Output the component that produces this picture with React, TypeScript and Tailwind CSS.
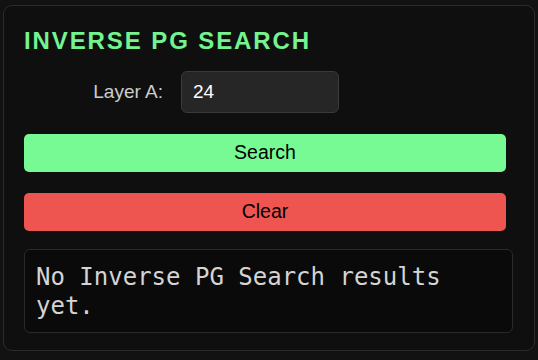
import { useState } from 'react';

export default function App() {
  const [layerA, setLayerA] = useState('24');

  return (
    <div className="min-h-screen bg-[#121212] pt-[5px] px-[3px]">
      <div className="bg-[#0f0f0f] border border-[#2c2c2c] rounded-[9px] px-5 pt-5 pb-[17px]">
        {/* Title */}
        <h2 className="text-[24px] leading-[29px] font-bold tracking-[1.9px] text-[#74f38f] font-['Liberation_Sans',Arial,sans-serif]">
          INVERSE PG SEARCH
        </h2>

        {/* Layer input */}
        <div className="flex items-center gap-[18px] mt-4">
          <label className="w-[139px] text-right text-[19px] text-[#cccccc] font-['Liberation_Sans',Arial,sans-serif]">
            Layer A:
          </label>
          <input
            type="text"
            value={layerA}
            onChange={(e) => setLayerA(e.target.value)}
            className="w-[158px] h-[42px] px-[11px] bg-[#262626] border border-[#3a3a3a] rounded-[6px] text-[19px] text-white outline-none font-['Liberation_Sans',Arial,sans-serif]"
          />
        </div>

        {/* Actions */}
        <button
          type="button"
          className="block w-[482px] h-[38px] mt-[21px] rounded-[5px] bg-[#77fa94] text-black text-[19.5px] font-['Liberation_Sans',Arial,sans-serif]"
        >
          Search
        </button>
        <button
          type="button"
          className="block w-[482px] h-[38px] mt-[21px] rounded-[5px] bg-[#ee5551] text-black text-[19.5px] font-['Liberation_Sans',Arial,sans-serif]"
        >
          Clear
        </button>

        {/* Results */}
        <div className="mt-[18px] w-[489px] bg-[#0a0a0a] border border-[#2a2a2a] rounded-[6px] px-[11px] pt-[13px] pb-[11px] text-[24px] leading-[29px] text-[#d4d4d4] font-['DejaVu_Sans_Mono',monospace]">
          No Inverse PG Search results yet.
        </div>
      </div>
    </div>
  );
}
